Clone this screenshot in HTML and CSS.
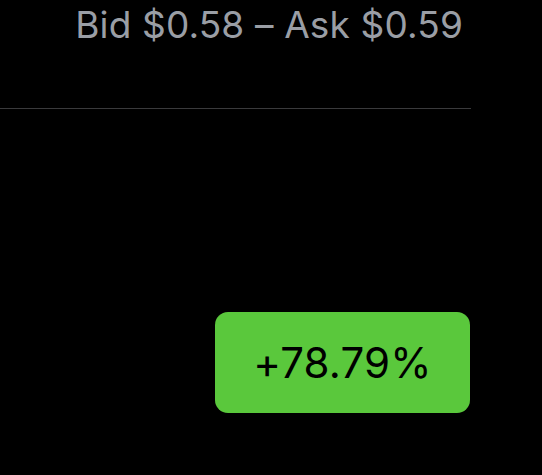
FILE: index.html
```html
<!DOCTYPE html>
<html>
<head>
<meta charset="utf-8">
<link rel="stylesheet" href="styles.css">
</head>
<body>
<div class="page">
  <div class="quote">Bid $0.58 – Ask $0.59</div>
  <div class="divider"></div>
  <div class="badge-row">
    <div class="badge">+78.79%</div>
  </div>
</div>
</body>
</html>
```
FILE: styles.css
```css
html, body {
  margin: 0;
  padding: 0;
  background: #000;
}
.page {
  width: 542px;
  height: 475px;
  display: flex;
  flex-direction: column;
  font-family: Inter, "Noto Sans", sans-serif;
}
.quote {
  width: 470px;
  text-align: right;
  color: #9a9ea5;
  font-size: 37px;
  letter-spacing: 0.15px;
  line-height: 44px;
  padding-top: 3px;
  padding-right: 7px;
  box-sizing: border-box;
}
.divider {
  margin-top: 61px;
  width: 471px;
  height: 1px;
  background: #3a3a3c;
}
.badge-row {
  width: 470px;
  display: flex;
  justify-content: flex-end;
  margin-top: 203px;
}
.badge {
  width: 255px;
  height: 101px;
  border-radius: 13px;
  background: #5ac83c;
  color: #000;
  font-size: 42px;
  letter-spacing: 0.2px;
  display: flex;
  align-items: center;
  justify-content: center;
}
```
